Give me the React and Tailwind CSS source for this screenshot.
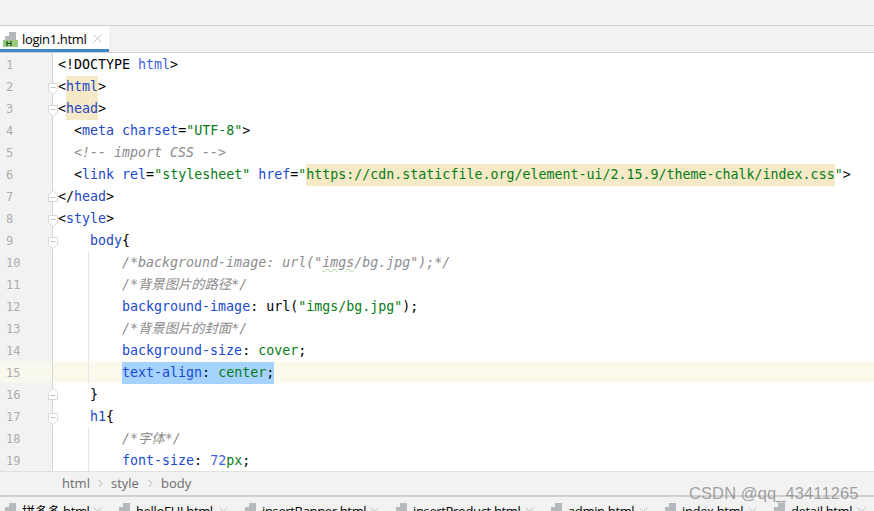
const MONO = "font-['DejaVu_Sans_Mono','Noto_Sans_CJK_SC',monospace]";

const T = ({ children }) => <span className="text-[#2348c4]">{children}</span>;
const A = ({ children }) => <span className="text-[#174ad4]">{children}</span>;
const S = ({ children }) => <span className="text-[#067d17]">{children}</span>;
const C = ({ children }) => <span className="text-[#8c8c8c] italic">{children}</span>;
const H = ({ children }) => <span className="bg-[#f5e9c8] pt-[3px] pb-[4px]">{children}</span>;

const lines = [
  { c: <>{"<!DOCTYPE "}<span className="text-[#3f5fe0]">html</span>{">"}</> },
  { f: "open", c: <>{"<"}<H><T>html</T></H>{">"}</> },
  { f: "open", c: <>{"<"}<H><T>head</T></H>{">"}</> },
  { c: <>{"  <"}<T>meta</T>{" "}<A>charset</A>{"="}<S>"UTF-8"</S>{">"}</> },
  { c: <>{"  "}<C>{"<!-- import CSS -->"}</C></> },
  { c: <>{"  <"}<T>link</T>{" "}<A>rel</A>{"="}<S>"stylesheet"</S>{" "}<A>href</A>{"="}<S>"</S><H><S>https://cdn.staticfile.org/element-ui/2.15.9/theme-chalk/index.css</S></H><S>"</S>{">"}</> },
  { f: "close", c: <>{"</"}<T>head</T>{">"}</> },
  { f: "open", c: <>{"<"}<T>style</T>{">"}</> },
  { f: "open", c: <>{"    "}<T>body</T>{"{"}</> },
  { g: true, c: <>{"        "}<C>{"/*background-image: url(\""}<span className="underline decoration-wavy decoration-[#a5d596] decoration-1">imgs</span>{"/bg.jpg\");*/"}</C></> },
  { g: true, c: <>{"        "}<C>{"/*背景图片的路径*/"}</C></> },
  { g: true, c: <>{"        "}<A>background-image</A>{": url("}<S>"imgs/bg.jpg"</S>{");"}</> },
  { g: true, c: <>{"        "}<C>{"/*背景图片的封面*/"}</C></> },
  { g: true, c: <>{"        "}<A>background-size</A>{": "}<S>cover</S>{";"}</> },
  { g: true, active: true, c: <>{"        "}<span className="bg-[#a6d2ff] pt-[3px] pb-[4px]"><A>text-align</A>{": "}<S>center</S>{";"}</span></> },
  { f: "close", c: <>{"    }"}</> },
  { f: "open", c: <>{"    "}<T>h1</T>{"{"}</> },
  { g: true, c: <>{"        "}<C>{"/*字体*/"}</C></> },
  { g: true, c: <>{"        "}<A>font-size</A>{": "}<span className="text-[#3f5fe0]">72</span><S>px</S>{";"}</> },
];

function Fold({ type }) {
  const close = type === "close";
  return (
    <svg width="10" height="12" viewBox="0 0 10 12" className={`absolute left-[48px] ${close ? "top-[5px]" : "top-[8px]"}`}>
      <path d={close ? "M0.5 11.5V4.5L5 0.5L9.5 4.5V11.5Z" : "M0.5 0.5H9.5V7.5L5 11.5L0.5 7.5Z"} fill="#fff" stroke="#d8d8d8" />
      <path d={close ? "M2.5 7.5H7.5" : "M2.5 4.5H7.5"} stroke="#c4c4c4" />
    </svg>
  );
}

function FileIcon({ html }) {
  return (
    <svg width="16" height="15" viewBox="0 0 16 15" className="shrink-0">
      <path d="M6 0H13V8H2V4H6Z" fill="#b5b9bd" />
      {html && <rect x="0" y="8" width="15" height="7" fill="#97c97f" />}
      {html && <path d="M4 9V14M8 9V14M4 11.5H8" stroke="#1d4d1d" strokeWidth="1.2" fill="none" />}
    </svg>
  );
}

const X = () => (
  <svg width="9" height="9" viewBox="0 0 9 9" className="shrink-0">
    <path d="M0.5 0.5L8.5 8.5M8.5 0.5L0.5 8.5" stroke="#c4c4c4" strokeWidth="1" />
  </svg>
);

const Chevron = () => (
  <svg width="5" height="9" viewBox="0 0 5 9" className="shrink-0">
    <path d="M1 1L4 4.5L1 8" stroke="#b5b5b5" fill="none" />
  </svg>
);

const tabs = [
  ["拼多多.html", "w-[64px]"],
  ["helloEUI.html", "w-[76px]"],
  ["insertBanner.html", "w-[101px]"],
  ["insertProduct.html", "w-[105px]"],
  ["admin.html", "w-[64px]"],
  ["index.html", "w-[59px]"],
  ["detail.html", "w-[59px]"],
];

export default function App() {
  return (
    <div className="w-[874px] h-[511px] overflow-hidden relative flex flex-col bg-white font-['Open_Sans','Noto_Sans_CJK_SC',sans-serif]">
      <div className="h-[26px] shrink-0 bg-[#f2f2f2] border-b border-[#d1d1d1]" />
      <div className="h-[27px] shrink-0 flex bg-[#f2f2f2] border-b border-[#d1d1d1]">
        <div className="w-[109px] h-[26px] bg-white border-b-[3px] border-[#4083c9] flex items-start pl-[3px]">
          <span className="mt-[6px]"><FileIcon html /></span>
          <span className="ml-[3px] mt-[7px] w-[64px] text-[13px] tracking-[-0.35px] text-black leading-none whitespace-nowrap">login1.html</span>
          <span className="ml-[7px] mt-[8px]"><X /></span>
        </div>
      </div>
      <div className={`flex-1 min-h-0 overflow-hidden ${MONO} text-[13.3px] text-black`}>
        {lines.map((l, i) => (
          <div key={i} className={`relative h-[22px] flex ${l.active ? "bg-[#fcfaed]" : ""}`}>
            <div className={`w-[53px] shrink-0 border-r border-[#d5d5d5] text-[#adadad] text-[12px] leading-[22px] pt-px pl-[6px] ${l.active ? "bg-[#f9f8ec]" : "bg-[#f2f2f2]"}`}>
              {i + 1}
            </div>
            {l.f && <Fold type={l.f} />}
            {l.g && <div className="absolute left-[88px] top-0 h-[22px] w-px bg-[#e6e6e6]" />}
            <pre className="relative pl-[5px] pt-px leading-[22px] font-[inherit] whitespace-pre">{l.c}</pre>
          </div>
        ))}
      </div>
      <div className="h-[26px] shrink-0 bg-[#f2f2f2] border-t border-[#e0e0e0] border-b-2 border-b-[#d1d1d1] flex items-center pl-[62px] text-[13px] text-[#6e6e6e]">
        <span className="w-[25px]">html</span>
        <span className="ml-[11px]"><Chevron /></span>
        <span className="ml-[8px] w-[26px]">style</span>
        <span className="ml-[11px]"><Chevron /></span>
        <span className="ml-[8px]">body</span>
      </div>
      <div className="h-[14px] shrink-0 bg-[#f2f2f2] flex overflow-hidden pl-[3px] items-start">
        {tabs.map(([name, w]) => (
          <div key={name} className="flex items-start h-[24px] mr-[15px] shrink-0">
            <span className="mt-[6px]"><FileIcon /></span>
            <span className={`ml-[3px] mt-[8px] ${w} text-[13px] tracking-[-0.35px] text-black whitespace-nowrap leading-none`}>{name}</span>
            <span className="ml-[7px] mt-[10px]"><X /></span>
          </div>
        ))}
      </div>
      <div className="absolute left-[689px] top-[483px] text-[16.5px] leading-[20px] text-[#8a8a8a]/80 font-['Liberation_Sans',sans-serif] tracking-[0.1px] whitespace-nowrap">
        CSDN @qq_43411265
      </div>
    </div>
  );
}
